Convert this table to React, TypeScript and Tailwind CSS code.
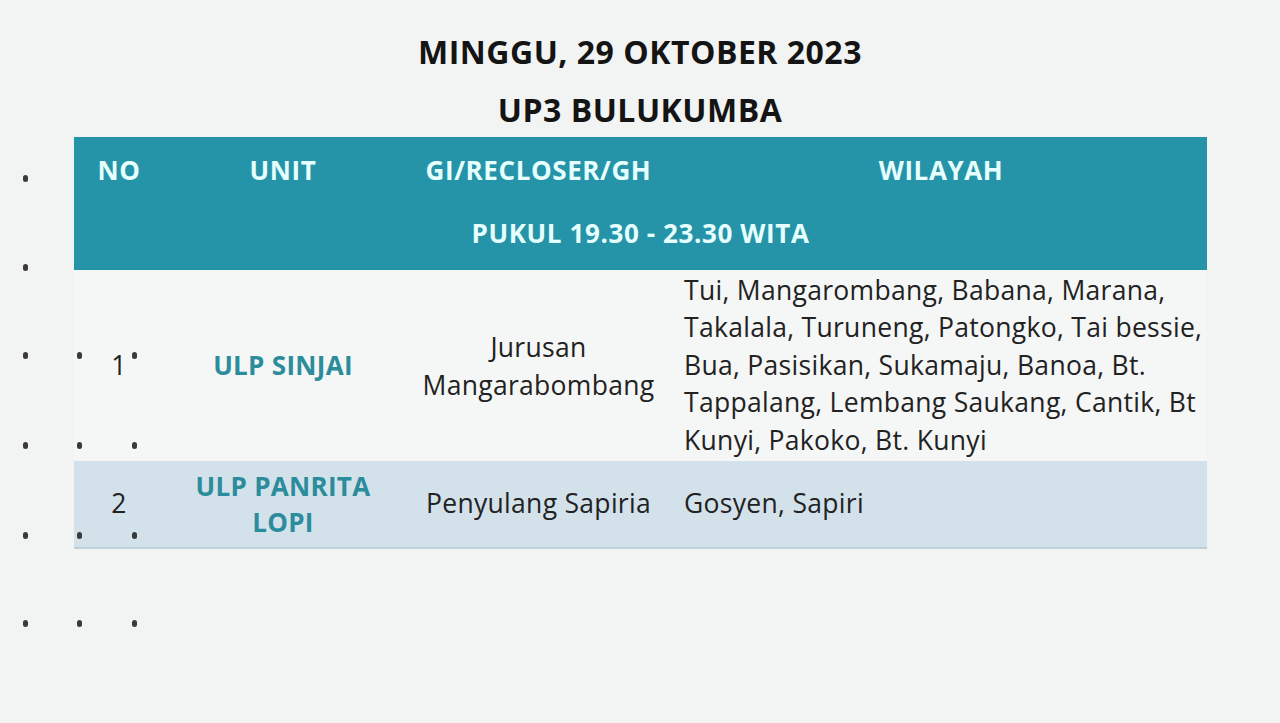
import React from 'react';

const font = { fontFamily: '"Open Sans", Lato, sans-serif' };

const dots: [number, number][] = [
  [25, 178], [25, 267],
  [25, 355], [79, 355], [134, 355],
  [25, 445], [79, 445], [134, 445],
  [25, 535], [79, 535], [134, 535],
  [25, 623], [79, 623], [134, 623],
];

const wilayah1 = [
  'Tui, Mangarombang, Babana, Marana,',
  'Takalala, Turuneng, Patongko, Tai bessie,',
  'Bua, Pasisikan, Sukamaju, Banoa, Bt.',
  'Tappalang, Lembang Saukang, Cantik, Bt',
  'Kunyi, Pakoko, Bt. Kunyi',
];

export default function App() {
  return (
    <div className="relative w-[1280px] h-[723px] bg-[#f2f3f3] overflow-hidden" style={font}>
      {/* judul */}
      <div className="flex flex-col items-center pt-[30px] text-[#141414] font-bold">
        <h1 className="text-[32px] leading-[44px] tracking-[0.5px]">MINGGU, 29 OKTOBER 2023</h1>
        <h2 className="text-[32px] leading-[44px] mt-[14px] tracking-[0.5px]">UP3 BULUKUMBA</h2>
      </div>

      {/* tabel */}
      <div className="ml-[74px] mt-[5px] w-[1133px]">
        <div className="bg-[#2694a8] text-[#e6ffff] font-bold text-[26px] tracking-[0.6px]">
          <div className="grid grid-cols-[90px_238px_273px_1fr] h-[67px] items-center text-center">
            <div>NO</div>
            <div>UNIT</div>
            <div>GI/RECLOSER/GH</div>
            <div>WILAYAH</div>
          </div>
          <div className="h-[66px] flex items-center justify-center pb-[8px]">PUKUL 19.30 - 23.30 WITA</div>
        </div>

        <div className="grid grid-cols-[90px_238px_273px_1fr] h-[191px] items-center bg-[#f5f6f6] text-[26.5px] tracking-[0.3px] text-[#222]">
          <div className="text-center">1</div>
          <div className="text-center font-bold text-[#2b8c9b] text-[26px] tracking-[0.3px]">ULP SINJAI</div>
          <div className="text-center leading-[38px]">Jurusan<br />Mangarabombang</div>
          <div className="pl-[9px] leading-[37.5px] whitespace-nowrap">
            {wilayah1.map(l => (
              <div key={l}>{l}</div>
            ))}
          </div>
        </div>

        <div className="grid grid-cols-[90px_238px_273px_1fr] h-[88px] items-center bg-[#d3e1eb] border-b-2 border-[#bfcfdb] text-[26.5px] tracking-[0.3px] text-[#222]">
          <div className="text-center">2</div>
          <div className="text-center font-bold text-[#2b8c9b] text-[26px] tracking-[0.3px] leading-[36px]">ULP PANRITA<br />LOPI</div>
          <div className="text-center">Penyulang Sapiria</div>
          <div className="pl-[9px]">Gosyen, Sapiri</div>
        </div>
      </div>

      {/* titik grid */}
      {dots.map(([x, y]) => (
        <span
          key={`${x}-${y}`}
          className="absolute w-[5px] h-[7px] rounded-full bg-[#3a3a3a]"
          style={{ left: x - 2, top: y - 3 }}
        />
      ))}
    </div>
  );
}
